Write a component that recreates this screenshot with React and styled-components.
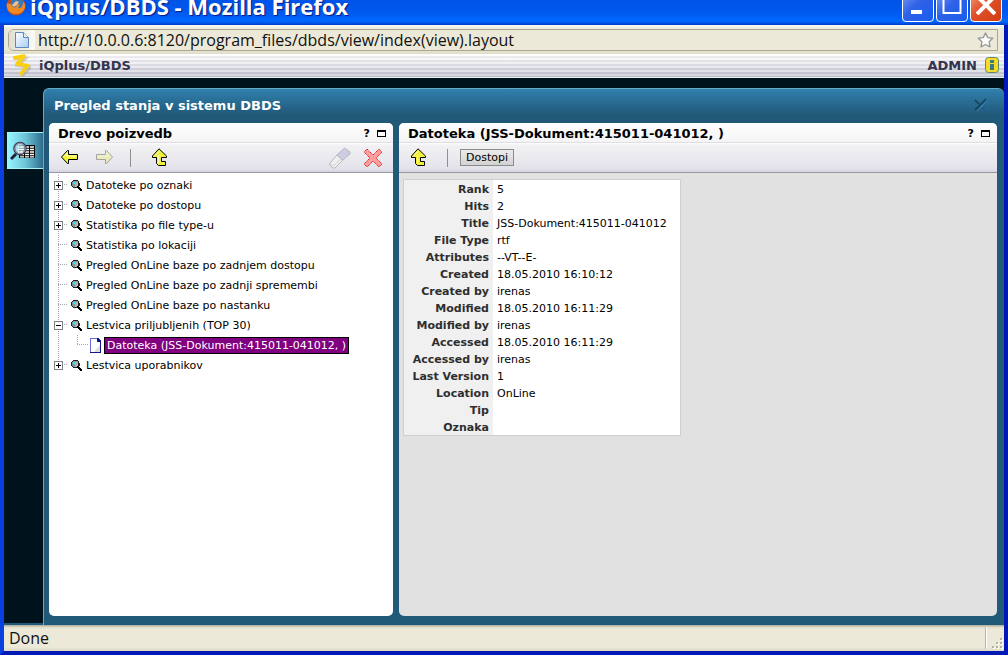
import React from 'react'
import styled, { createGlobalStyle } from 'styled-components'

const fonts = {
  ui: '"DejaVu Sans", Verdana, sans-serif',
  chrome: '"Open Sans", Tahoma, sans-serif',
  title: '"Open Sans", "Trebuchet MS", sans-serif',
}

const colors = {
  night: '#00131c',
  panel: '#215979',
  panelTop: '#3080ad',
  edge: '#6aa9c4',
  toolbarLine: '#9a9a9e',
  beige: '#ece9d8',
}

const GlobalStyle = createGlobalStyle`
  *{
    box-sizing:border-box;
  }
  body{
    margin:0;
    font-family:${fonts.ui};
    font-size:11px;
    color:#000;
  }
  button{
    font-family:inherit;
    color:inherit;
    padding:0;
    border:0;
    background:none;
  }
  svg{
    display:block;
    flex:none;
  }
`

const Window = styled.div`
  min-height:100vh;
  display:flex;
  flex-direction:column;
  border:solid #0033d8;
  border-width:0 4px 4px;
  border-color:#0a3fe0 #0019b4 #0019b4 #0a3fe0;
  background:${colors.night};
`

const TitleBar = styled.header`
  height:25px;
  margin:0 -4px;
  padding:0 6px 3px 6px;
  display:flex;
  align-items:flex-end;
  justify-content:space-between;
  background:linear-gradient(#0054e8 0, #0058ee 12px, #0066ff 20px, #0062f8 22px, #0038c8 25px);

  h1{
    margin:0;
    display:flex;
    align-items:flex-end;
    gap:4px;
    font-family:${fonts.title};
    font-size:22px;
    line-height:32px;
    font-weight:700;
    color:#fff;
    white-space:nowrap;
    text-shadow:1px 1px 1px #0a1883;
  }
  h1 svg{
    margin-bottom:6px;
  }
`

const WindowButtons = styled.div`
  display:flex;
  gap:2px;
`

const WindowButton = styled.button`
  width:32px;
  height:32px;
  border:1px solid #fff;
  border-radius:4px;
  background:${({ $close }) => $close
    ? 'linear-gradient(135deg, #f0a080, #e0502a 45%, #d03c10)'
    : 'linear-gradient(135deg, #7a9cf4, #2f62e6 45%, #1a5cf0)'};
  display:grid;
  place-items:end center;
  padding-bottom:6px;
`

const AddressBar = styled.form`
  height:29px;
  padding:4px 6px 3px 4px;
  display:flex;
  background:linear-gradient(#fdfdfa, ${colors.beige} 4px, ${colors.beige} 24px, #dfdcc8);

  .field{
    flex:1;
    display:flex;
    align-items:center;
    border:1px solid #a9a792;
    border-radius:6px 0 0 6px;
    background:${colors.beige};
    overflow:hidden;
    padding-right:3px;
  }
  .site{
    width:26px;
    align-self:stretch;
    display:grid;
    place-items:center;
    background:linear-gradient(90deg, #e2e0d2, #fbfaf6);
  }
  input{
    flex:1;
    min-width:0;
    padding:0 3px;
    border:0;
    outline:0;
    background:none;
    font-family:${fonts.chrome};
    font-size:16px;
    line-height:20px;
    color:#111;
  }
`

const AppBar = styled.div`
  height:24px;
  padding:0 4px 0 7px;
  display:flex;
  align-items:center;
  gap:8px;
  color:#33334d;
  font-size:13px;
  font-weight:700;
  border-bottom:1px solid #e6f4f6;
  background:
    repeating-linear-gradient(rgba(255,255,255,.35) 0 2px, rgba(140,140,160,.12) 2px 4px),
    linear-gradient(#fff, #e4e4ea 50%, #bcbccb);

  .user{
    margin-left:auto;
  }
`

const Workspace = styled.main`
  flex:1;
  display:flex;
  padding-top:10px;
  background:${colors.night};
`

const SideTabs = styled.nav`
  width:39px;
  padding:44px 0 0 3px;
  border-bottom:2px solid ${colors.panel};
`

const SideTab = styled.button`
  width:36px;
  height:37px;
  padding-right:5px;
  display:grid;
  place-items:center;
  border:1px solid #a4f4fc;
  border-right:0;
  background:linear-gradient(90deg, #98f4ff, #6cc4d8 50%, #2c6c8c);
`

const Perspective = styled.section`
  flex:1;
  min-width:0;
  display:flex;
  flex-direction:column;
  border:1px solid ${colors.edge};
  border-width:1px 0 0 1px;
  border-radius:6px 6px 0 0;
  background:linear-gradient(${colors.panelTop}, ${colors.panel} 26px);
  padding:0 7px 9px 5px;
`

const PerspectiveHead = styled.div`
  height:34px;
  padding:0 9px 2px 5px;
  display:flex;
  align-items:center;
  justify-content:space-between;

  h2{
    margin:0;
    font-size:13px;
    color:#fff;
  }
`

const Columns = styled.div`
  flex:1;
  display:grid;
  grid-template-columns:344px minmax(0, 1fr);
  gap:6px;
`

const Panel = styled.article`
  display:flex;
  flex-direction:column;
  border-radius:5px;
  overflow:hidden;
  background:${({ $grey }) => ($grey ? '#e1e1e1' : '#fff')};
`

const PanelHead = styled.div`
  height:20px;
  padding:2px 7px 0 9px;
  display:flex;
  align-items:center;
  gap:7px;
  background:linear-gradient(#fff, #f4f4f6);
  border-bottom:1px solid #dedee4;

  h3{
    margin:0 auto 0 0;
    font-size:13px;
    line-height:16px;
    white-space:nowrap;
  }
  button{
    font-size:11px;
    line-height:16px;
    font-weight:700;
  }
`

const Toolbar = styled.div`
  height:30px;
  padding:0 10px 0 11px;
  display:flex;
  align-items:center;
  background:linear-gradient(#fff 0, #f2f2f4 2px, #e2e2ea 26px, #d4d4e4);
  border-bottom:1px solid ${colors.toolbarLine};
`

const ToolButton = styled.button`
  margin-right:${({ $gap = 0 }) => $gap}px;
  opacity:${({ disabled }) => (disabled ? 0.3 : 1)};
`

const Divider = styled.span`
  width:1px;
  height:18px;
  margin-right:${({ $gap }) => $gap}px;
  background:#909090;
`

const Spacer = styled.span`
  flex:1;
`

const TextButton = styled.button`
  && {
    height:17px;
    padding:0 5px;
    border:1px solid #8c8c8c;
    font-size:11px;
    line-height:15px;
    background:linear-gradient(#ececec, #d2d2d2);
  }
`

const dotsDown = 'repeating-linear-gradient(#a8a8a8 0 1px, transparent 1px 2px)'
const dotsAcross = 'repeating-linear-gradient(90deg, #a8a8a8 0 1px, transparent 1px 2px)'

const Tree = styled.ul`
  margin:0;
  padding:2px 5px;
  list-style:none;

  ul{
    margin:0;
    padding:0 0 0 19px;
    list-style:none;
    background:${dotsDown} 4px 0 / 1px 100% no-repeat;
  }
`

const TreeRow = styled.div`
  height:20px;
  display:flex;
  align-items:center;
  white-space:nowrap;
  background:
    ${dotsDown} 4px 0 / 1px ${({ $last }) => ($last ? '10px' : '100%')} no-repeat,
    ${dotsAcross} 4px 9px / ${({ $leaf }) => ($leaf ? 11 : 10)}px 1px no-repeat;

  svg{
    margin-right:${({ $leaf }) => ($leaf ? 3 : 4)}px;
  }
`

const Toggle = styled.button`
  width:9px;
  height:9px;
  margin-right:8px;
  visibility:${({ $hidden }) => ($hidden ? 'hidden' : 'visible')};
`

const Label = styled.span`
  line-height:15px;
  ${({ $selected }) => $selected && `
    padding:0 2px;
    border:1px solid #000;
    background:#800080;
    color:#fff;
  `}
`

const Details = styled.table`
  margin:6px 4px;
  align-self:flex-start;
  border-collapse:separate;
  border-spacing:0;
  border:1px solid #cfcfcf;
  background:#fff;
  white-space:nowrap;

  th, td{
    height:17px;
    padding:2px 4px 0;
    line-height:15px;
  }
  th{
    min-width:89px;
    text-align:right;
    color:#2e2e2e;
    background:#f0f0f0;
  }
  td{
    min-width:187px;
  }
`

const StatusBar = styled.footer`
  height:26px;
  padding:0 1px 1px 5px;
  display:flex;
  align-items:center;
  justify-content:space-between;
  font-family:${fonts.chrome};
  font-size:16px;
  color:#111;
  background:linear-gradient(#a8a594 0, #dedac8 2px, ${colors.beige} 4px, ${colors.beige} 22px, #dcd9c4);

  .grip{
    height:22px;
    padding-left:4px;
    display:flex;
    align-items:flex-end;
    border-left:1px solid #b8b5a2;
    box-shadow:inset 1px 0 #fff;
  }
`

const FoxIcon = () => (
  <svg width="20" height="20" viewBox="0 0 20 20">
    <circle cx="10" cy="10" r="9.5" fill="#c8500c" />
    <circle cx="11" cy="8" r="6.5" fill="#3a78b8" />
    <path d="M1 7c2 1 3 0 5 2 0 2 2 3 4 2l1-2 3-1-2 4c3 1 5-2 5-6l2 2c1 5-3 10-9 10S0 14 1 7z" fill="#f08a24" />
    <path d="M6 9l4-4 3 1-2 3-3 2z" fill="#f4c28c" />
  </svg>
)

const PageIcon = () => (
  <svg width="14" height="16" viewBox="0 0 14 16">
    <defs>
      <linearGradient id="page" x1="0" y1="0" x2="1" y2="1">
        <stop offset="0" stopColor="#fff" />
        <stop offset="1" stopColor="#a8ccf4" />
      </linearGradient>
    </defs>
    <path d="M.5.5h8l5 5v10H.5z" fill="url(#page)" stroke="#5f86bd" />
    <path d="M8.500.5v5h5" fill="#e8f2fd" stroke="#5f86bd" />
  </svg>
)

const StarIcon = () => (
  <svg width="17" height="16" viewBox="0 0 17 16">
    <path
      d="M8.500 1l2.200 4.600 5 .7-3.600 3.500.9 5.100-4.500-2.400-4.500 2.400.9-5.100L1.300 6.300l5-.7z"
      fill="#fff"
      stroke="#999"
      strokeWidth="1.400"
      strokeLinejoin="round"
    />
  </svg>
)

const LogoIcon = () => (
  <svg width="20" height="23" viewBox="0 0 20 23" fill="none" strokeWidth="3.500">
    <path d="M3 4.500h11L7 11l12 2-8 9" stroke="#a8a090" opacity=".5" />
    <path d="M2 4l11-2-7 8 10.500 1.500L9 21" stroke="#fccf0c" strokeLinejoin="round" />
  </svg>
)

const InfoIcon = () => (
  <svg width="15" height="17" viewBox="0 0 15 17">
    <rect x=".5" y=".5" width="13" height="15" rx="3" fill="#f6dc28" stroke="#5e8a6c" />
    <path d="M5 3h4v3H5zM5 7h4v6H5z" fill="#3c7c80" />
  </svg>
)

const SearchTableIcon = () => (
  <svg width="26" height="20" viewBox="0 0 26 20">
    <path d="M9 4h16v13H9z" fill="#000" />
    <path d="M10 6h14M10 8.500h14M10 11h14M10 13.500h14M10 15.800h14" stroke="#fff" strokeWidth="1.300" />
    <path d="M14.500 4v13M19.500 4v13" stroke="#000" />
    <path d="M1 18l5-5" stroke="#222236" strokeWidth="3" />
    <circle cx="10" cy="7.500" r="5.800" fill="#b8dce6" fillOpacity=".75" stroke="#37374c" strokeWidth="2" />
    <circle cx="10" cy="7.500" r="5.300" fill="none" stroke="#9c98b8" />
    <path d="M8 6h5M8 8.500h5M8 11h5" stroke="#fff" />
  </svg>
)

const ToolsIcon = () => (
  <svg width="14" height="14" viewBox="0 0 14 14" fill="none">
    <path d="M1 12L12 1M1 2l4 4M9 9l3 3" stroke="#123f58" strokeWidth="1.500" />
    <path d="M3 13L13 3M8 8l5 5" stroke="#3f8fc4" strokeDasharray="2 1" />
  </svg>
)

const ArrowIcon = ({ flip }) => (
  <svg width="19" height="17" viewBox="0 0 19 17" transform={flip ? 'scale(-1 1)' : undefined}>
    <path d="M8.500 1.500v4h9v5h-9v4h-1l-6-6.500 6-6.500z" fill="#f4f43c" stroke="#000" />
    <path d="M3 8l4-4v3h9" fill="none" stroke="#ffffc4" />
  </svg>
)

const UpIcon = () => (
  <svg width="17" height="19" viewBox="0 0 17 19">
    <path d="M8 .8L15.500 8v1.500h-5v4h4v4h-7l-2-2v-6h-4V8z" fill="#f0f03c" stroke="#000" />
    <path d="M3.500 8L8 3.500M7.500 7v8" fill="none" stroke="#ffffc4" />
  </svg>
)

const EraserIcon = () => (
  <svg width="22" height="22" viewBox="0 0 22 22">
    <path d="M.5 16.500L8 8l6 5-8 8H4l-3.500-3z" fill="#efefef" stroke="#b8b8bc" />
    <path d="M8 8l7.500-7 5.500 4v2l-7 6z" fill="#cdcde2" stroke="#b8b8c4" />
    <path d="M1 17l4 1.500L13 11" fill="none" stroke="#cfcfcf" />
  </svg>
)

const DeleteIcon = () => (
  <svg width="20" height="20" viewBox="0 0 20 20">
    <path
      d="M4 1l6 6 6-6 3 3-6 6 6 6-3 3-6-6-6 6-3-3 6-6-6-6z"
      fill="#ff9c9c"
      stroke="#e02828"
      strokeDasharray="1.500 .6"
    />
  </svg>
)

const MaximizeIcon = () => (
  <svg width="9" height="7" viewBox="0 0 9 7" shapeRendering="crispEdges">
    <path d="M0 0h9v7H0zM1 2v4h7V2z" fill="#000" fillRule="evenodd" />
  </svg>
)

const LensIcon = () => (
  <svg width="11" height="11" viewBox="0 0 11 11" shapeRendering="crispEdges">
    <path d="M2 1h5v1h1v5H7v1H2V7H1V2h1z" fill="#7c9498" />
    <path d="M4 2h3v5H4z" fill="#b4b4b4" />
    <path d="M2 2h2v2H2z" fill="#28e8f0" />
    <path d="M2 0h5v1H2zM1 1h1v1H1zM0 2h1v4H0zM1 6h1v1H1zM2 7h5v1H2zM7 1h1v6H7zM8 3h1v3H8z" fill="#222" />
    <path d="M6 6h2v1h1v1h1v1h1v2H9v-1H8V9H7V8H6z" fill="#000" />
  </svg>
)

const DocIcon = () => (
  <svg width="11" height="15" viewBox="0 0 11 15" shapeRendering="crispEdges">
    <path d="M0 0h8l3 3v12H0z" fill="#6c6cdc" />
    <path d="M1 1h6v3h3v10H1z" fill="#fff" />
    <path d="M5 13l5-6v7H5z" fill="#deded8" />
    <path d="M7 0h1l3 3v12h-1V4H7zM0 14h11v1H0z" fill="#14148c" />
  </svg>
)

const ToggleIcon = ({ open }) => (
  <svg width="9" height="9" viewBox="0 0 9 9" shapeRendering="crispEdges">
    <rect width="9" height="9" fill="#808080" />
    <rect x="1" y="1" width="7" height="7" fill="#fff" />
    <path d={open ? 'M2 4h5v1H2z' : 'M2 4h5v1H2zM4 2h1v5H4z'} fill="#000" />
  </svg>
)

const GripIcon = () => (
  <svg width="13" height="13" viewBox="0 0 13 13" shapeRendering="crispEdges">
    <path d="M11 3h2v2h-2zM7 7h2v2H7zM11 7h2v2h-2zM3 11h2v2H3zM7 11h2v2H7zM11 11h2v2h-2z" fill="#fff" />
    <path d="M10 2h2v2h-2zM6 6h2v2H6zM10 6h2v2h-2zM2 10h2v2H2zM6 10h2v2H6zM10 10h2v2h-2z" fill="#b4b19d" />
  </svg>
)

const queries = [
  { name: 'Datoteke po oznaki', toggle: 'closed' },
  { name: 'Datoteke po dostopu', toggle: 'closed' },
  { name: 'Statistika po file type-u', toggle: 'closed' },
  { name: 'Statistika po lokaciji' },
  { name: 'Pregled OnLine baze po zadnjem dostopu' },
  { name: 'Pregled OnLine baze po zadnji spremembi' },
  { name: 'Pregled OnLine baze po nastanku' },
  { name: 'Lestvica priljubljenih (TOP 30)', toggle: 'open', child: 'Datoteka (JSS-Dokument:415011-041012, )' },
  { name: 'Lestvica uporabnikov', toggle: 'closed' },
]

const details = [
  ['Rank', '5'],
  ['Hits', '2'],
  ['Title', 'JSS-Dokument:415011-041012'],
  ['File Type', 'rtf'],
  ['Attributes', '--VT--E-'],
  ['Created', '18.05.2010 16:10:12'],
  ['Created by', 'irenas'],
  ['Modified', '18.05.2010 16:11:29'],
  ['Modified by', 'irenas'],
  ['Accessed', '18.05.2010 16:11:29'],
  ['Accessed by', 'irenas'],
  ['Last Version', '1'],
  ['Location', 'OnLine'],
  ['Tip', ''],
  ['Oznaka', ''],
]

function PanelTitle({ children }) {
  return (
    <PanelHead>
      <h3>{children}</h3>
      <button type="button" aria-label="Help">?</button>
      <button type="button" aria-label="Maximize panel"><MaximizeIcon /></button>
    </PanelHead>
  )
}

function QueryTree() {
  return (
    <Tree>
      {queries.map(({ name, toggle, child }, i) => (
        <li key={name}>
          <TreeRow $last={i === queries.length - 1}>
            <Toggle type="button" $hidden={!toggle} aria-label={`Toggle ${name}`}>
              <ToggleIcon open={toggle === 'open'} />
            </Toggle>
            <LensIcon />
            <Label>{name}</Label>
          </TreeRow>
          {child && (
            <ul>
              <li>
                <TreeRow $leaf $last>
                  <Toggle type="button" $hidden aria-label={`Toggle ${child}`} />
                  <DocIcon />
                  <Label $selected>{child}</Label>
                </TreeRow>
              </li>
            </ul>
          )}
        </li>
      ))}
    </Tree>
  )
}

function App() {
  return (
    <Window>
      <GlobalStyle />
      <TitleBar>
        <h1><FoxIcon />iQplus/DBDS - Mozilla Firefox</h1>
        <WindowButtons>
          <WindowButton type="button" aria-label="Minimize">
            <svg width="20" height="20" viewBox="0 0 20 20"><path d="M3 15h11v4H3z" fill="#fff" /></svg>
          </WindowButton>
          <WindowButton type="button" aria-label="Maximize">
            <svg width="20" height="20" viewBox="0 0 20 20"><path d="M1.500 1v17h17V1z" fill="none" stroke="#fff" strokeWidth="2" /></svg>
          </WindowButton>
          <WindowButton type="button" $close aria-label="Close">
            <svg width="20" height="20" viewBox="0 0 20 20"><path d="M1 1l18 18M19 1L1 19" stroke="#fff" strokeWidth="4" /></svg>
          </WindowButton>
        </WindowButtons>
      </TitleBar>
      <AddressBar>
        <div className="field">
          <span className="site"><PageIcon /></span>
          <input aria-label="Address" defaultValue="http://10.0.0.6:8120/program_files/dbds/view/index(view).layout" />
          <button type="button" aria-label="Bookmark"><StarIcon /></button>
        </div>
      </AddressBar>
      <AppBar>
        <LogoIcon />
        <span>iQplus/DBDS</span>
        <span className="user">ADMIN</span>
        <button type="button" aria-label="Info"><InfoIcon /></button>
      </AppBar>
      <Workspace>
        <SideTabs>
          <SideTab type="button" aria-label="Queries"><SearchTableIcon /></SideTab>
        </SideTabs>
        <Perspective>
          <PerspectiveHead>
            <h2>Pregled stanja v sistemu DBDS</h2>
            <button type="button" aria-label="Tools"><ToolsIcon /></button>
          </PerspectiveHead>
          <Columns>
            <Panel>
              <PanelTitle>Drevo poizvedb</PanelTitle>
              <Toolbar>
                <ToolButton type="button" $gap={16} aria-label="Back"><ArrowIcon /></ToolButton>
                <ToolButton type="button" $gap={16} disabled aria-label="Forward"><ArrowIcon flip /></ToolButton>
                <Divider $gap={20} />
                <ToolButton type="button" aria-label="Up"><UpIcon /></ToolButton>
                <Spacer />
                <ToolButton type="button" $gap={12} aria-label="Clear"><EraserIcon /></ToolButton>
                <ToolButton type="button" aria-label="Delete"><DeleteIcon /></ToolButton>
              </Toolbar>
              <QueryTree />
            </Panel>
            <Panel $grey>
              <PanelTitle>Datoteka (JSS-Dokument:415011-041012, )</PanelTitle>
              <Toolbar>
                <ToolButton type="button" $gap={20} aria-label="Up"><UpIcon /></ToolButton>
                <Divider $gap={12} />
                <TextButton type="button">Dostopi</TextButton>
              </Toolbar>
              <Details>
                <tbody>
                  {details.map(([label, value]) => (
                    <tr key={label}>
                      <th scope="row">{label}</th>
                      <td>{value}</td>
                    </tr>
                  ))}
                </tbody>
              </Details>
            </Panel>
          </Columns>
        </Perspective>
      </Workspace>
      <StatusBar>
        <span>Done</span>
        <span className="grip"><GripIcon /></span>
      </StatusBar>
    </Window>
  )
}

export default App
